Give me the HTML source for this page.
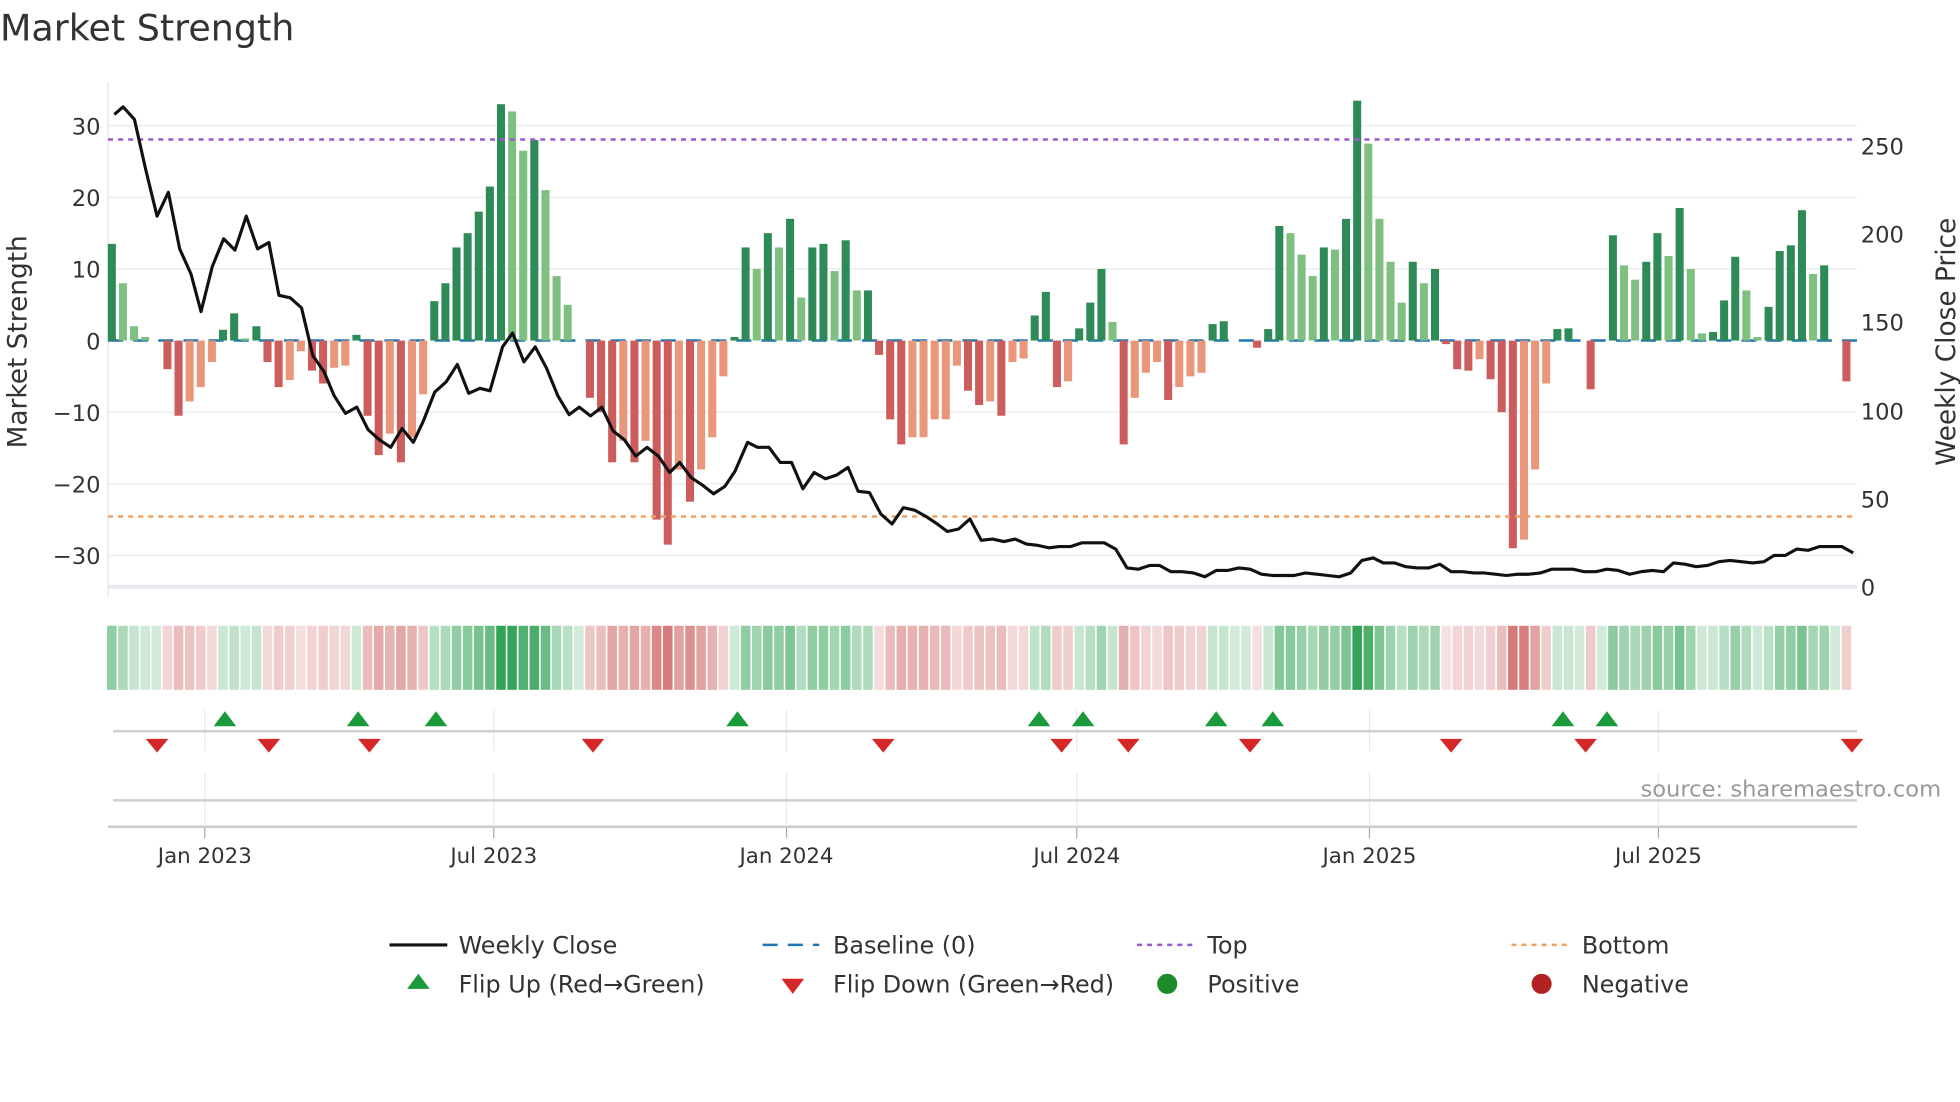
<!DOCTYPE html>
<html><head><meta charset="utf-8"><style>
html,body{margin:0;padding:0;background:#fff;width:1960px;height:1102px;overflow:hidden}
svg{display:block}
text{font-family:"DejaVu Sans","Liberation Sans",sans-serif;fill:#333}
</style></head><body>
<svg id="s" width="1960" height="1102" viewBox="0 0 1560 877" xmlns="http://www.w3.org/2000/svg">
<text x="0" y="32" font-size="29" fill="#333">Market Strength</text>
<g id="grid"></g>
<line x1="86" y1="65" x2="86" y2="475" stroke="#e2e4ea" stroke-width="1"/>
<line x1="86" y1="467" x2="1478" y2="467" stroke="#e6e8f0" stroke-width="3"/>
<line x1="86" y1="271" x2="1478" y2="271" stroke="#1f77b4" stroke-width="2" stroke-dasharray="12,8"/>
<g id="bars"></g>
<line x1="86" y1="111" x2="1478" y2="111" stroke="#9b59d0" stroke-width="2" stroke-dasharray="4,4"/>
<line x1="86" y1="411" x2="1478" y2="411" stroke="#f0a060" stroke-width="2" stroke-dasharray="4,4"/>
<polyline id="price" fill="none" stroke="#111" stroke-width="2.5" stroke-linejoin="round"/>
<g font-size="18" text-anchor="end">
<text x="80" y="107">30</text><text x="80" y="164">20</text><text x="80" y="221">10</text><text x="80" y="278">0</text><text x="80" y="335">−10</text><text x="80" y="392">−20</text><text x="80" y="449">−30</text>
</g>
<g font-size="18">
<text x="1481" y="123">250</text><text x="1481" y="193">200</text><text x="1481" y="263">150</text><text x="1481" y="334">100</text><text x="1481" y="404">50</text><text x="1481" y="474">0</text>
</g>
<text transform="translate(21,272) rotate(-90)" font-size="21" text-anchor="middle">Market Strength</text>
<text transform="translate(1556,272) rotate(-90)" font-size="21" text-anchor="middle">Weekly Close Price</text>
<g id="heat"></g>
<g id="vg" stroke="#e8eaf0" stroke-width="1"></g>
<line x1="90" y1="582" x2="1478" y2="582" stroke="#d0d0d0" stroke-width="2"/>
<line x1="90" y1="637" x2="1478" y2="637" stroke="#d0d0d0" stroke-width="2"/>
<line x1="86" y1="658" x2="1478" y2="658" stroke="#ccc" stroke-width="2"/>
<g id="mk"></g>
<g font-size="17" text-anchor="middle">
<text x="163" y="687">Jan 2023</text><text x="393" y="687">Jul 2023</text><text x="626" y="687">Jan 2024</text><text x="857" y="687">Jul 2024</text><text x="1090" y="687">Jan 2025</text><text x="1320" y="687">Jul 2025</text>
</g>
<text x="1545" y="634" font-size="18" text-anchor="end" fill="#999" style="fill:#999">source: sharemaestro.com</text>
<g font-size="19">
<line x1="310" y1="752" x2="356" y2="752" stroke="#111" stroke-width="2.5"/><text x="365" y="759">Weekly Close</text>
<line x1="607" y1="752" x2="652" y2="752" stroke="#1f77b4" stroke-width="2" stroke-dasharray="12,8"/><text x="663" y="759">Baseline (0)</text>
<line x1="905" y1="752" x2="950" y2="752" stroke="#9b59d0" stroke-width="2" stroke-dasharray="4,4"/><text x="961" y="759">Top</text>
<line x1="1203" y1="752" x2="1248" y2="752" stroke="#f0a060" stroke-width="2" stroke-dasharray="4,4"/><text x="1259" y="759">Bottom</text>
<polygon points="324,787 342,787 333,775" fill="#1a9a3a"/><text x="365" y="790">Flip Up (Red→Green)</text>
<polygon points="622,779 640,779 631,791" fill="#d62728"/><text x="663" y="790">Flip Down (Green→Red)</text>
<circle cx="929" cy="783" r="8" fill="#1f8a2a"/><text x="961" y="790">Positive</text>
<circle cx="1227" cy="783" r="8" fill="#b22222"/><text x="1259" y="790">Negative</text>
</g>
</svg>
<script>
var NS="http://www.w3.org/2000/svg";
function el(p,t,a){var e=document.createElementNS(NS,t);for(var k in a)e.setAttribute(k,a[k]);document.getElementById(p).appendChild(e);return e;}
[30,20,10,-10,-20,-30].forEach(function(v){var y=271-5.7*v;el("grid","line",{x1:86,x2:1478,y1:y,y2:y,stroke:"#eef0f4","stroke-width":1.5});});
var d="13.5D 8L 2L .5L 0 -4R -10.5R -8.5S -6.5S -3S 1.5D 3.8D .3L 2D -3R -6.5R -5.5S -1.5S -4.2R -6R -3.8S -3.5S .8D -10.5R -16R -13S -17R -13.5S -7.5S 5.5D 8D 13D 15D 18D 21.5D 33D 32L 26.5L 28D 21L 9L 5L 0 -8R -10R -17R -14S -17R -14S -25R -28.5R -18S -22.5R -18S -13.5S -5S .5D 13D 10L 15D 13L 17D 6L 13D 13.5D 9.7L 14D 7L 7D -2R -11R -14.5R -13.5S -13.5S -11S -11S -3.5S -7R -9R -8.5S -10.5R -3S -2.5S 3.5D 6.8D -6.5R -5.7S 1.7D 5.3D 10D 2.6L -14.5R -8S -4.5S -3S -8.3R -6.5S -5S -4.5S 2.3D 2.7D 0 0 -1R 1.6D 16D 15L 12L 9L 13D 12.7L 17D 33.5D 27.5L 17L 11L 5.3L 11D 8L 10D -.5R -4R -4.2R -2.6S -5.4R -10R -29R -27.8S -18S -6S 1.6D 1.7D 0 -6.8R 0 14.7D 10.5L 8.5L 11D 15D 11.8L 18.5D 10L 1L 1.2D 5.6D 11.7D 7L .5L 4.7D 12.5D 13.3D 18.2D 9.3L 10.5D 0 -5.7R".split(" ");
var C={D:"#2e8b57",L:"#7fbf7f",R:"#cd5c5c",S:"#e9967a"};
d.forEach(function(s,i){var v=parseFloat(s),c=s.slice(-1);var x=89+8.85*i;
 if(v!==0&&C[c]){var y1=271,y2=271-5.7*v;el("bars","rect",{x:x-3.2,y:Math.min(y1,y2),width:6.4,height:Math.abs(y2-y1),fill:C[c]});}
 var a;if(v>=0){a=0.22+0.75*Math.min(v/33,1);}else{a=0.16+0.6*Math.min(-v/29,1);}
 var col=v>=0?"rgba(44,160,80,"+a.toFixed(2)+")":"rgba(200,80,80,"+a.toFixed(2)+")";
 el("heat","rect",{x:x-3.8,y:498,width:7.6,height:51,fill:col});
});
var pts="91,91 98,85 107,95 116,135 125,172 134,153 143,198 152,218 160,248 169,212 178,190 187,199 196,172 205,198 214,193 222,235 231,237 240,245 249,283 258,296 266,315 275,329 284,324 293,342 302,350 311,356 320,341 329,352 337,335 346,312 355,304 364,290 373,313 382,309 390,311 400,276 408,265 417,288 426,276 435,293 444,315 453,330 461,324 470,331 479,324 488,343 497,350 506,363 515,356 524,363 533,376 541,368 550,380 559,386 568,393 577,387 585,375 595,352 603,356 612,356 621,368 630,368 639,389 648,376 657,381 666,378 675,372 683,391 692,392 701,409 710,417 719,404 728,406 737,411 746,417 754,423 763,421 772,413 781,430 790,429 799,431 808,429 817,433 826,434 835,436 843,435 852,435 861,432 870,432 879,432 888,437 897,452 906,453 915,450 923,450 932,455 941,455 950,456 959,459 968,454 977,454 986,452 995,453 1004,457 1013,458 1021,458 1030,458 1039,456 1048,457 1057,458 1066,459 1075,456 1084,446 1093,444 1101,448 1110,448 1119,451 1128,452 1137,452 1146,449 1155,455 1164,455 1173,456 1181,456 1190,457 1199,458 1208,457 1217,457 1226,456 1235,453 1244,453 1252,453 1261,455 1270,455 1279,453 1288,454 1297,457 1306,455 1315,454 1324,455 1332,448 1341,449 1350,451 1359,450 1368,447 1377,446 1386,447 1395,448 1404,447 1412,442 1421,442 1430,437 1439,438 1448,435 1457,435 1466,435 1475,440";
document.getElementById("price").setAttribute("points",pts);
[163,393,626,857,1090,1320].forEach(function(x){
 el("vg","line",{x1:x,x2:x,y1:565,y2:598});el("vg","line",{x1:x,x2:x,y1:615,y2:656});
 el("vg","line",{x1:x,x2:x,y1:658,y2:667,stroke:"#aaa"});});
[179,285,347,587,827,862,968,1013,1244,1279].forEach(function(x){el("mk","polygon",{points:(x-9)+",578 "+(x+9)+",578 "+x+",566",fill:"#1a9a3a"});});
[125,214,294,472,703,845,898,995,1155,1262,1474].forEach(function(x){el("mk","polygon",{points:(x-9)+",588 "+(x+9)+",588 "+x+",599",fill:"#d62728"});});
</script>
</body></html>
